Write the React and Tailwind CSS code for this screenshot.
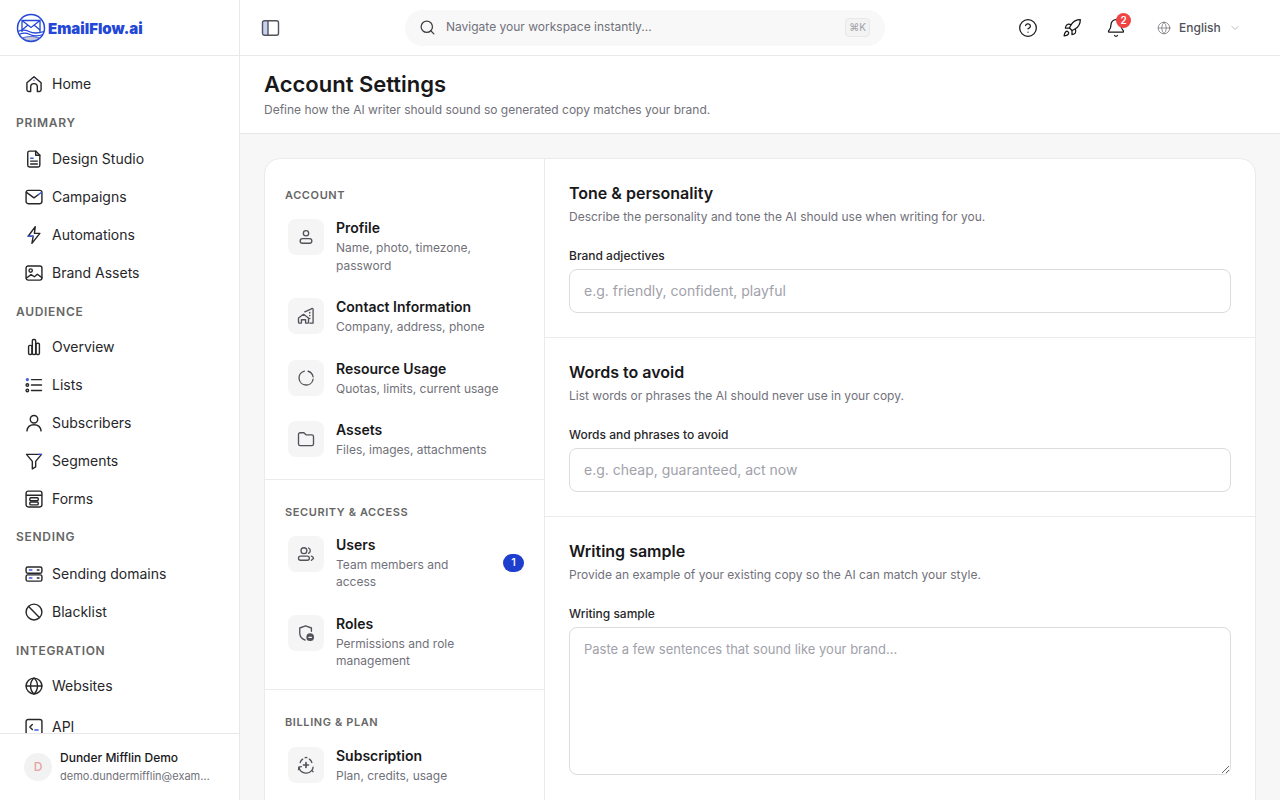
import { Search, ChevronDown, CircleHelp, Rocket, Bell, Globe } from "lucide-react"

const BLUE = "#3b5bdb"

function Svg({ size = 20, stroke = 1.7, className = "", children }) {
  return (
    <svg
      width={size}
      height={size}
      viewBox="0 0 24 24"
      fill="none"
      stroke="currentColor"
      strokeWidth={stroke}
      strokeLinecap="round"
      strokeLinejoin="round"
      className={className}
    >
      {children}
    </svg>
  )
}

const icons = {
  home: (
    <>
      <path d="M3.500 10.500 12 3.200l8.500 7.300V19a2 2 0 0 1-2 2H16v-5.500a4 4 0 0 0-8 0V21H5.500a2 2 0 0 1-2-2z" />
      <path d="M12 7.500h.01" stroke={BLUE} />
    </>
  ),
  file: (
    <>
      <path d="M6.500 2.500h7.500l5 5V19.500a2 2 0 0 1-2 2H6.500a2 2 0 0 1-2-2v-15a2 2 0 0 1 2-2z" />
      <path d="M14 2.500v5h5" />
      <path d="M8 11h3" stroke={BLUE} />
      <path d="M8 14.500h8M8 18h8" />
    </>
  ),
  mail: (
    <>
      <rect x="2.500" y="4" width="19" height="16" rx="2.500" />
      <path d="m3 6.500 9 6.500 5.500-4" />
      <path d="m17.500 9 3.500-2.500" stroke={BLUE} />
    </>
  ),
  zap: (
    <>
      <path d="M13.500 2 5 13.500h6L9.500 22 19 10h-6.500z" />
      <path d="M5 13.500h6" stroke={BLUE} />
    </>
  ),
  image: (
    <>
      <rect x="2.500" y="3.500" width="19" height="17" rx="2.500" />
      <circle cx="8" cy="9" r="2" />
      <path d="m3 18 5.500-4 4 2.500 3.500-3 5.500 4" />
    </>
  ),
  bars: (
    <>
      <rect x="5.500" y="10" width="4" height="11" rx="1.500" />
      <rect x="10" y="3" width="4" height="18" rx="1.500" />
      <rect x="14.500" y="7.500" width="4" height="13.500" rx="1.500" />
    </>
  ),
  list: (
    <>
      <path d="M9 5.500h12M9 12h12M9 18.500h12" />
      <circle cx="4" cy="5.500" r="1.100" stroke={BLUE} />
      <circle cx="4" cy="12" r="1.500" />
      <circle cx="4" cy="18.500" r="1.500" />
    </>
  ),
  user: (
    <>
      <circle cx="12" cy="7.500" r="4.500" />
      <path d="M3.500 21.500c.5-5 4-7.500 8.500-7.500s8 2.500 8.500 7.500" />
    </>
  ),
  funnel: (
    <>
      <path d="M3 4h18l-7 8.500V19l-4 2.500v-9z" />
      <path d="m18 4 3 0" stroke={BLUE} />
    </>
  ),
  form: (
    <>
      <rect x="2.500" y="2.500" width="19" height="19" rx="2.500" />
      <path d="M3 7.500h18" />
      <rect x="7" y="10.500" width="10" height="3.500" rx="1" />
      <rect x="7" y="15.500" width="10" height="3.500" rx="1" />
    </>
  ),
  server: (
    <>
      <rect x="2.500" y="3.500" width="19" height="7.500" rx="2" />
      <rect x="2.500" y="13" width="19" height="7.500" rx="2" />
      <path d="M6.500 7.250h3" stroke={BLUE} />
      <path d="M6.500 16.750h3" stroke={BLUE} />
      <path d="M16 7.250h2M16 16.750h2" />
    </>
  ),
  ban: (
    <>
      <circle cx="12" cy="12" r="9.500" />
      <path d="m5.500 5.500 13 13" />
    </>
  ),
  globe: (
    <>
      <circle cx="12" cy="12" r="9.500" />
      <path d="M2.500 12h19" />
      <path d="M12 2.500c3 2.600 4.200 6 4.200 9.500s-1.200 6.900-4.200 9.500c-3-2.600-4.200-6-4.200-9.500s1.200-6.900 4.200-9.500z" />
    </>
  ),
  terminal: (
    <>
      <rect x="2.500" y="3" width="19" height="18" rx="2.500" />
      <path d="m10 9-3 3 3 3" />
      <path d="M13 15.500h4" stroke={BLUE} />
    </>
  ),
  profile: (
    <>
      <circle cx="12" cy="7.500" r="3.200" />
      <rect x="5" y="14" width="14" height="5.500" rx="2.750" />
    </>
  ),
  building: (
    <>
      <path d="M10.500 7 18.500 3.500a1 1 0 0 1 2 1V20.500H16.500" />
      <path d="M3 14.500 9 10l6 4.500v5a1 1 0 0 1-1 1h-2.500v-4h-5v4H4a1 1 0 0 1-1-1z" />
      <path d="M16.500 8h.01M16.500 11.500h.01M16.500 15h.01" strokeWidth="2" />
    </>
  ),
  usage: (
    <>
      <path d="M14.500 3.900a8.500 8.500 0 0 1 6 6.600" />
      <path d="M20.500 13.500A8.500 8.500 0 1 1 10 3.700" />
    </>
  ),
  folder: <path d="M3 6.500a2 2 0 0 1 2-2h4.500l2.500 2.500h7a2 2 0 0 1 2 2v9a2 2 0 0 1-2 2H5a2 2 0 0 1-2-2z" />,
  users: (
    <>
      <circle cx="9.500" cy="8" r="3.500" />
      <path d="M15 4.800a3.500 3.500 0 0 1 0 6.400" />
      <rect x="3" y="14.500" width="13" height="5" rx="2.500" />
      <path d="M18.500 14.500c1.500.6 2.500 1.800 2.500 3l-2.500 2" />
    </>
  ),
  shield: (
    <>
      <path d="M11 20.500C7 19 4.500 16 4.500 12V6L11.500 3.500 18.500 6v4" />
      <circle cx="17" cy="17" r="3.800" fill="currentColor" />
      <path d="M15.500 17.200h3" stroke="#f5f5f5" />
    </>
  ),
  sub: (
    <>
      <path d="M5 9a8 8 0 0 1 3-4M11 3.100a9 9 0 0 1 2 0M16 5a8 8 0 0 1 3 4" />
      <path d="M3.500 14.500a8.800 8.800 0 0 0 15.500 4l1.500 1.500M20.500 14.500a8 8 0 0 1-1.500 4" />
      <path d="M3.500 14.500 6.500 14M3.500 14.500 3 17.500" />
      <path d="M12 9v6M9 12h6" strokeWidth="2" />
    </>
  ),
}

const navSections = [
  { items: [["home", "Home"]] },
  {
    label: "PRIMARY",
    labelClass: "h-[37px] pt-[2px]",
    items: [
      ["file", "Design Studio"],
      ["mail", "Campaigns"],
      ["zap", "Automations"],
      ["image", "Brand Assets"],
    ],
  },
  {
    label: "AUDIENCE",
    labelClass: "h-[36px] pt-[3px]",
    items: [
      ["bars", "Overview"],
      ["list", "Lists"],
      ["user", "Subscribers"],
      ["funnel", "Segments"],
      ["form", "Forms"],
    ],
  },
  {
    label: "SENDING",
    labelClass: "h-[37px] pt-[1px]",
    items: [
      ["server", "Sending domains"],
      ["ban", "Blacklist"],
    ],
  },
  {
    label: "INTEGRATION",
    labelClass: "h-[36px] pt-[3px]",
    items: [
      ["globe", "Websites"],
      ["terminal", "API"],
    ],
  },
]

const settingsGroups = [
  {
    label: "ACCOUNT",
    className: "pt-[28px] pb-[20px] border-b border-[#ebebeb]",
    items: [
      ["profile", "Profile", "Name, photo, timezone, password"],
      ["building", "Contact Information", "Company, address, phone"],
      ["usage", "Resource Usage", "Quotas, limits, current usage"],
      ["folder", "Assets", "Files, images, attachments"],
    ],
  },
  {
    label: "SECURITY & ACCESS",
    className: "pt-[24px] pb-[19px] border-b border-[#ebebeb]",
    items: [
      ["users", "Users", "Team members and access", 1],
      ["shield", "Roles", "Permissions and role management"],
    ],
  },
  {
    label: "BILLING & PLAN",
    className: "pt-[24px] pb-[20px]",
    listClass: "mt-[16px]",
    items: [["sub", "Subscription", "Plan, credits, usage"]],
  },
]

function Logo() {
  return (
    <svg width="30" height="30" viewBox="0 0 30 30" fill="none" stroke="#2347d6" strokeWidth="1.300">
      <circle cx="15" cy="15" r="13.500" strokeWidth="1.500" />
      <path d="M6 19V7.500h18V19" />
      <path d="m6 7.500 9 7 9-7M6 17l6-5M24 17l-6-5" />
      <path d="M2 18.500c4-2 7-2 11 0s9 2 15 0M3 21.500c4-2 7-2 11 0s8 2 13 0" />
      <path d="M6.500 25c5-2 11-2 17 0a13.500 13.500 0 0 1-17 0z" fill="#c9ccd6" stroke="#2347d6" strokeWidth="0.800" />
    </svg>
  )
}

function Sidebar() {
  return (
    <aside className="w-[240px] h-full shrink-0 flex flex-col bg-white border-r border-[#e8e8e8]">
      <div className="h-[56px] shrink-0 flex items-center pl-[16px] gap-[2px] border-b border-[#e8e8e8]">
        <Logo />
        <span className="pt-[3px] text-[15px] font-black text-[#2347d6]">EmailFlow.ai</span>
      </div>
      <nav className="flex-1 overflow-hidden pt-[9px]">
        {navSections.map((section, i) => (
          <div key={i}>
            {section.label && (
              <div className={`${section.labelClass} flex items-center pl-[16px] text-[12px] font-semibold tracking-[0.7px] text-[#666666]`}>
                {section.label}
              </div>
            )}
            {section.items.map(([icon, text]) => (
              <div
                key={text}
                className={`h-[38px] flex items-center gap-[8px] pl-[24px] text-[14px] text-[#27272a] ${text === "API" ? "mt-[3px]" : ""}`}
              >
                <Svg>{icons[icon]}</Svg>
                <span className="pb-[2px]">{text}</span>
              </div>
            ))}
          </div>
        ))}
      </nav>
      <div className="h-[67px] shrink-0 flex items-center gap-[8px] pl-[24px] border-t border-[#e8e8e8]">
        <div className="w-[28px] h-[28px] rounded-full bg-[#f2f2f2] flex items-center justify-center text-[12px] font-medium text-[#e5a3a3]">
          D
        </div>
        <div className="w-[152px]">
          <div className="text-[12px] leading-[18px] font-medium text-[#18181b]">Dunder Mifflin Demo</div>
          <div className="text-[11px] leading-[18px] text-[#71717a] truncate w-[152px]">demo.dundermifflin@example.com</div>
        </div>
      </div>
    </aside>
  )
}

function TopBar() {
  return (
    <header className="h-[56px] shrink-0 flex items-center bg-white border-b border-[#e8e8e8]">
      <button className="ml-[21px] text-[#52525b]">
        <svg width="19" height="18" viewBox="0 0 19 18" fill="none" stroke="currentColor" strokeWidth="1.400">
          <rect x="2" y="2" width="5" height="14" fill="#c7d2f0" stroke="none" />
          <rect x="1.500" y="1.700" width="16" height="14.600" rx="2" />
          <path d="M7 2v14" />
        </svg>
      </button>
      <div className="ml-[125px] w-[480px] h-[36px] rounded-full bg-[#f8f8f8] flex items-center pl-[14px] pr-[15px]">
        <Search size={17} strokeWidth={1.8} className="text-[#3f3f46]" />
        <span className="ml-[10px] pb-[2px] flex-1 text-[12px] text-[#71717a]">Navigate your workspace instantly...</span>
        <span className="w-[25px] h-[19px] flex items-center justify-center rounded-[4px] border border-[#e8e8e8] bg-[#f3f3f3] text-[10px] text-[#a1a1aa]">
          ⌘K
        </span>
      </div>
      <div className="ml-[133px] flex items-center gap-[24px] text-[#18181b]">
        <CircleHelp size={20} strokeWidth={1.5} />
        <Rocket size={20} strokeWidth={1.5} />
        <div className="relative">
          <Bell size={20} strokeWidth={1.5} />
          <span className="absolute -top-[5px] -right-[5px] w-[15px] h-[15px] rounded-full bg-[#ef4444] flex items-center justify-center text-[10px] font-semibold text-white">
            2
          </span>
        </div>
      </div>
      <div className="ml-[31px] flex items-center text-[#52525b]">
        <Globe size={14} strokeWidth={1.3} className="text-[#71717a]" />
        <span className="ml-[8px] text-[12px] font-medium">English</span>
        <ChevronDown size={12} strokeWidth={1.5} className="ml-[8px] text-[#a1a1aa]" />
      </div>
    </header>
  )
}

function SettingItem({ icon, title, desc, badge }) {
  return (
    <div className={`flex items-center ${badge ? "gap-4" : "gap-3"}`}>
      <div className="flex-1 flex items-start gap-3">
        <div className="w-[36px] h-[36px] mt-px shrink-0 rounded-lg bg-[#f5f5f5] flex items-center justify-center text-[#52525b]">
          <Svg size={20} stroke={1.6}>{icons[icon]}</Svg>
        </div>
        <div className="flex-1">
          <div className="text-[14px] leading-[20px] font-semibold text-[#18181b]">{title}</div>
          <div className="text-[12px] leading-[17.5px] text-[#71717a] pt-px">{desc}</div>
        </div>
      </div>
      {badge && (
        <span className="w-[21px] h-[18px] rounded-full bg-[#1e3fce] flex items-center justify-center text-[11px] font-medium text-white">
          {badge}
        </span>
      )}
    </div>
  )
}

function SettingsNav() {
  return (
    <div className="w-[280px] shrink-0 border-r border-[#ebebeb]">
      {settingsGroups.map((group) => (
        <div key={group.label} className={group.className}>
          <div className="pl-[20px] text-[11px] leading-[16px] font-semibold tracking-[0.6px] text-[#666666]">{group.label}</div>
          <div className={`${group.listClass || "mt-[15px]"} pl-[23px] pr-[20px] flex flex-col gap-[23px]`}>
            {group.items.map(([icon, title, desc, badge]) => (
              <SettingItem key={title} icon={icon} title={title} desc={desc} badge={badge} />
            ))}
          </div>
        </div>
      ))}
    </div>
  )
}

function FormSection({ title, desc, label, children, last }) {
  return (
    <section className={`px-6 pt-[22px] ${last ? "pb-16" : "pb-6 border-b border-[#ebebeb]"}`}>
      <h2 className="text-[16px] leading-[24px] font-semibold text-[#18181b]">{title}</h2>
      <p className="mt-[2px] text-[12px] leading-[20px] text-[#71717a]">{desc}</p>
      <label className="block mt-[19px] mb-[3px] text-[12px] leading-[20px] font-medium text-[#27272a]">{label}</label>
      {children}
    </section>
  )
}

const fieldClass =
  "block w-full border border-[#dcdcdc] rounded-lg px-[14px] bg-white outline-none placeholder:text-[#a1a1aa]"

export default function App() {
  return (
    <div className="h-screen w-full overflow-hidden flex font-['Inter',sans-serif] bg-[#f7f7f7]">
      <Sidebar />
      <div className="flex-1 min-w-0 flex flex-col">
        <TopBar />
        <div className="h-[78px] shrink-0 bg-white border-b border-[#e8e8e8] pl-[24px] pt-[14px]">
          <h1 className="text-[22px] leading-[28px] font-semibold text-[#18181b]">Account Settings</h1>
          <p className="mt-[2px] text-[12px] leading-[20px] text-[#71717a]">
            Define how the AI writer should sound so generated copy matches your brand.
          </p>
        </div>
        <main className="flex-1 min-h-0 overflow-hidden px-6 pt-6">
          <div className="flex rounded-2xl border border-[#ebebeb] bg-white">
            <SettingsNav />
            <div className="flex-1 min-w-0">
              <FormSection
                title="Tone & personality"
                desc="Describe the personality and tone the AI should use when writing for you."
                label="Brand adjectives"
              >
                <input className={`${fieldClass} h-[44px] text-[14px] pb-[2px]`} placeholder="e.g. friendly, confident, playful" />
              </FormSection>
              <FormSection
                title="Words to avoid"
                desc="List words or phrases the AI should never use in your copy."
                label="Words and phrases to avoid"
              >
                <input className={`${fieldClass} h-[44px] text-[14px] pb-[2px]`} placeholder="e.g. cheap, guaranteed, act now" />
              </FormSection>
              <FormSection
                last
                title="Writing sample"
                desc="Provide an example of your existing copy so the AI can match your style."
                label="Writing sample"
              >
                <textarea className={`${fieldClass} h-[148px] py-[12px] text-[13px]`} placeholder="Paste a few sentences that sound like your brand..." />
              </FormSection>
            </div>
          </div>
        </main>
      </div>
    </div>
  )
}
